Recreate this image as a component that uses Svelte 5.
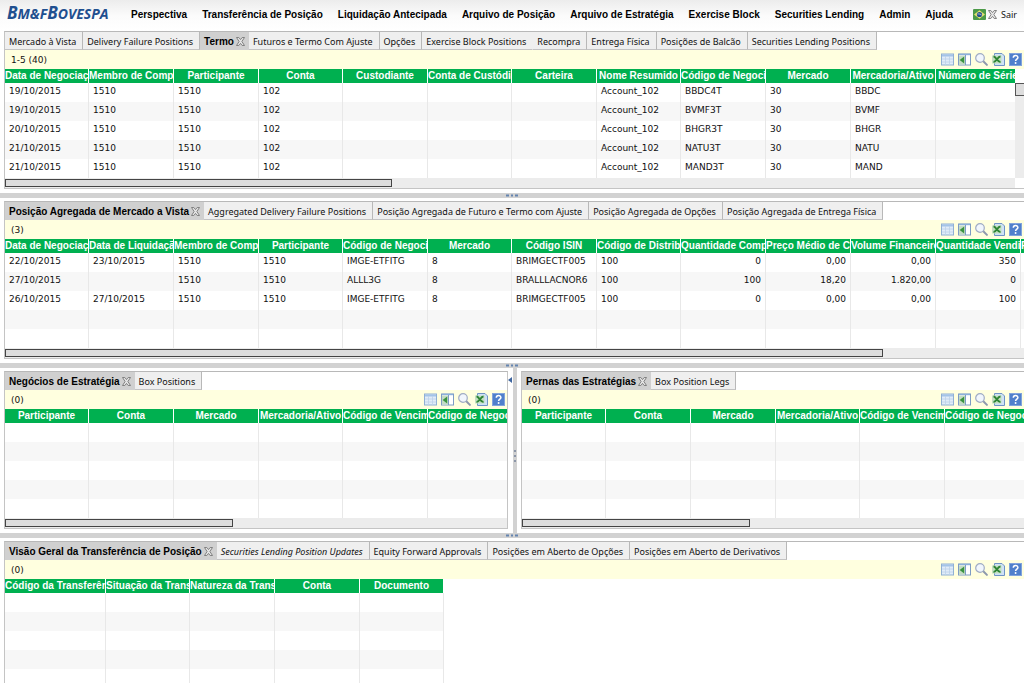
<script>
  const menu = [
    'Perspectiva', 'Transferência de Posição', 'Liquidação Antecipada', 'Arquivo de Posição',
    'Arquivo de Estratégia', 'Exercise Block', 'Securities Lending', 'Admin', 'Ajuda'
  ];

  const colWidths = [84, 85, 85, 84, 85, 84, 85, 84, 85, 85, 85, 85];
  const tools = ['Grid', 'Columns', 'Search', 'Excel', 'Help'];

  function emptyRows(count, cols) {
    return Array.from({ length: count }, () => Array(cols).fill(''));
  }

  const termo = {
    tabs: ['Mercado à Vista', 'Delivery Failure Positions', 'Termo', 'Futuros e Termo Com Ajuste', 'Opções', 'Exercise Block Positions', 'Recompra', 'Entrega Física', 'Posições de Balcão', 'Securities Lending Positions'],
    active: 2,
    merged: 5,
    count: '1-5 (40)',
    widths: colWidths,
    headers: ['Data de Negociação', 'Membro de Compensação', 'Participante', 'Conta', 'Custodiante', 'Conta de Custódia', 'Carteira', 'Nome Resumido', 'Código de Negociação', 'Mercado', 'Mercadoria/Ativo', 'Número de Série'],
    rows: [
      ['19/10/2015', '1510', '1510', '102', '', '', '', 'Account_102', 'BBDC4T', '30', 'BBDC', ''],
      ['19/10/2015', '1510', '1510', '102', '', '', '', 'Account_102', 'BVMF3T', '30', 'BVMF', ''],
      ['20/10/2015', '1510', '1510', '102', '', '', '', 'Account_102', 'BHGR3T', '30', 'BHGR', ''],
      ['21/10/2015', '1510', '1510', '102', '', '', '', 'Account_102', 'NATU3T', '30', 'NATU', ''],
      ['21/10/2015', '1510', '1510', '102', '', '', '', 'Account_102', 'MAND3T', '30', 'MAND', '']
    ],
    thumb: 38,
    vertical: true
  };

  const vista = {
    tabs: ['Posição Agregada de Mercado a Vista', 'Aggregated Delivery Failure Positions', 'Posição Agregada de Futuro e Termo com Ajuste', 'Posição Agregada de Opções', 'Posição Agregada de Entrega Física'],
    active: 0,
    count: '(3)',
    widths: [...colWidths, 84],
    numeric: 8,
    headers: ['Data de Negociação', 'Data de Liquidação', 'Membro de Compensação', 'Participante', 'Código de Negociação', 'Mercado', 'Código ISIN', 'Código de Distribuição', 'Quantidade Comprada', 'Preço Médio de Compra', 'Volume Financeiro', 'Quantidade Vendida', 'Preço Médio de Venda'],
    rows: [
      ['22/10/2015', '23/10/2015', '1510', '1510', 'IMGE-ETFITG', '8', 'BRIMGECTF005', '100', '0', '0,00', '0,00', '350', ''],
      ['27/10/2015', '', '1510', '1510', 'ALLL3G', '8', 'BRALLLACNOR6', '100', '100', '18,20', '1.820,00', '0', ''],
      ['26/10/2015', '27/10/2015', '1510', '1510', 'IMGE-ETFITG', '8', 'BRIMGECTF005', '100', '0', '0,00', '0,00', '100', ''],
      ...emptyRows(2, 13)
    ],
    thumb: 86.2
  };

  const legHeaders = ['Participante', 'Conta', 'Mercado', 'Mercadoria/Ativo', 'Código de Vencimento', 'Código de Negociação'];

  const negocios = {
    tabs: ['Negócios de Estratégia', 'Box Positions'],
    active: 0,
    count: '(0)',
    widths: colWidths.slice(0, 6),
    headers: legHeaders,
    rows: emptyRows(5, 6),
    thumb: 45.5
  };

  const pernas = { ...negocios, tabs: ['Pernas das Estratégias', 'Box Position Legs'] };

  const geral = {
    tabs: ['Visão Geral da Transferência de Posição', 'Securities Lending Position Updates', 'Equity Forward Approvals', 'Posições em Aberto de Opções', 'Posições em Aberto de Derivativos'],
    active: 0,
    italic: 1,
    count: '(0)',
    widths: [101, 84, 85, 85, 84],
    headers: ['Código da Transferência', 'Situação da Transferência', 'Natureza da Transferência', 'Conta', 'Documento'],
    rows: emptyRows(6, 5)
  };
</script>

{#snippet closeIcon()}
  <svg class="close-icon" viewBox="0 0 9 9" aria-hidden="true">
    <path d="M.5 .5h2.3L4.5 2.6 6.2 .5h2.3L5.9 4.5 8.5 8.5H6.2L4.5 6.4 2.8 8.5H.5L3.1 4.5z" fill="#e4e4e4" stroke="#777" stroke-width=".9" />
  </svg>
{/snippet}

{#snippet toolIcon(name)}
  <svg viewBox="0 0 13 13" aria-hidden="true">
    {#if name === 'Grid'}
      <rect x=".5" y="1" width="12" height="11" fill="#e0ecf8" stroke="#8fb0d4" />
      <path d="M1 2.5h11" stroke="#a4c4e8" stroke-width="2" />
      <path d="M4.5 3v9M8.5 3v9M1 6h11M1 9h11" stroke="#bcd2ea" stroke-width=".8" />
    {:else if name === 'Columns'}
      <rect x=".5" y="1" width="12" height="11" fill="#fff" stroke="#7d9cc4" />
      <path d="M1 1.5h11" stroke="#8cb0dc" stroke-width="1.4" />
      <rect x="1" y="2.5" width="6" height="9" fill="#c4dcc4" />
      <path d="M6.2 3.4v7L1.6 6.9z" fill="#3a9440" />
      <path d="M7.5 2v10" stroke="#7d9cc4" />
    {:else if name === 'Search'}
      <path d="M8.3 8.3l3.6 3.6" stroke="#8d98ac" stroke-width="2" stroke-linecap="round" />
      <circle cx="5" cy="5" r="4.3" fill="#f1f6fd" stroke="#a0acc4" stroke-width="1.2" />
    {:else if name === 'Excel'}
      <path d="M2.5 .5h7.500l2.500 2.500v9.500h-10z" fill="#cfe2f6" stroke="#6f94c6" />
      <rect x="0" y="2.500" width="9.500" height="8" fill="#c4dfc0" />
      <path d="M1.500 3.500c2.500 0 4 5.500 7 5.500M8.500 3.500c-3 0-4 5.500-7 5.500" fill="none" stroke="#2d8434" stroke-width="2" />
    {:else}
      <rect x=".5" y=".5" width="12" height="12" fill="#5080cc" stroke="#82a4dc" />
      <path d="M4.300 4.800c0-3 4.600-2.900 4.600-.3 0 1.700-2.300 1.700-2.300 3.500" fill="none" stroke="#fff" stroke-width="1.500" />
      <circle cx="6.600" cy="10" r=".95" fill="#fff" />
    {/if}
  </svg>
{/snippet}

{#snippet dots()}
  <svg class="dots" viewBox="0 0 14 5" aria-hidden="true">
    <path d="M1 1.500h3v2H1zM6 1.500h2v2H6zM10 1.500h3v2h-3z" fill="#6484b0" />
  </svg>
{/snippet}

{#snippet panel(p)}
  <section class="panel">
    <div class="tabs">
      {#each p.tabs as tab, i}
        <div class="tab" class:active={i === p.active} class:italic={i === p.italic} class:merged={i === p.merged}>
          <button>{tab}</button>
          {#if i === p.active}
            <button aria-label="Fechar">{@render closeIcon()}</button>
          {/if}
        </div>
      {/each}
    </div>
    <div class="toolbar">
      <span>{p.count}</span>
      <div class="tools">
        {#each tools as tool}
          <button aria-label={tool}>{@render toolIcon(tool)}</button>
        {/each}
      </div>
    </div>
    <div class="content">
      <div class="grid">
        <table>
          <colgroup>
            {#each p.widths as width}
              <col style="width: {width}px" />
            {/each}
          </colgroup>
          <thead>
            <tr>
              {#each p.headers as header}
                <th>{header}</th>
              {/each}
            </tr>
          </thead>
          <tbody>
            {#each p.rows as row}
              <tr>
                {#each row as cell, i}
                  <td class:number={p.numeric && i >= p.numeric}>{cell}</td>
                {/each}
              </tr>
            {/each}
          </tbody>
        </table>
      </div>
      {#if p.vertical}
        <div class="vscroll"><div class="vthumb"></div></div>
      {/if}
    </div>
    {#if p.thumb}
      <div class="hscroll" class:short={p.vertical}>
        <div class="hthumb" style="width: {p.thumb}%"></div>
      </div>
    {/if}
  </section>
{/snippet}

<div class="app">
  <header>
    <div class="logo">B<small>M&amp;F</small>B<small>OVESPA</small></div>
    <nav>
      {#each menu as item}
        <button>{item}</button>
      {/each}
    </nav>
    <div class="session">
      <svg class="flag" viewBox="0 0 13 11" aria-hidden="true">
        <rect width="13" height="11" rx="1" fill="#4c9a48" />
        <path d="M6.500 1.200L12 5.500 6.500 9.800 1 5.500z" fill="#e4e070" />
        <circle cx="6.500" cy="5.500" r="2.600" fill="#24508c" />
        <path d="M4.500 5c1.500-.3 3 .1 4 1" stroke="#fff" stroke-width=".6" fill="none" />
      </svg>
      <button class="exit">{@render closeIcon()} Sair</button>
    </div>
  </header>

  {@render panel(termo)}
  <div class="splitter">{@render dots()}</div>
  {@render panel(vista)}
  <div class="splitter">{@render dots()}</div>
  <div class="split">
    {@render panel(negocios)}
    <div class="vsplitter">
      <svg class="collapse" viewBox="0 0 4 6" aria-hidden="true"><path d="M4 0v6L0 3z" fill="#3f66a0" /></svg>
      <svg class="grip" viewBox="0 0 2 12" aria-hidden="true"><path d="M0 0h2v2H0zM0 5h2v2H0zM0 10h2v2H0z" fill="#8c96a8" /></svg>
    </div>
    {@render panel(pernas)}
  </div>
  <div class="splitter">{@render dots()}</div>
  {@render panel(geral)}
</div>

<style>
  :global(body) {
    margin: 0;
    background: #fff;
  }

  .app {
    height: 100vh;
    overflow: hidden;
    font-family: "DejaVu Sans", sans-serif;
    font-size: 9px;
    color: #111;
  }

  button {
    border: 0;
    padding: 0;
    background: none;
    font: inherit;
    color: inherit;
    white-space: nowrap;
  }

  svg {
    display: block;
  }

  header {
    display: flex;
    align-items: center;
    height: 27px;
    padding: 0 7px 4px;
    background: linear-gradient(#ececec, #fbfbfb 50%, #fff);
  }

  .logo {
    width: 124px;
    flex: none;
    font: italic 700 17px "Open Sans", sans-serif;
    line-height: 24px;
    color: #1f4f8f;
  }

  .logo small {
    font-size: 14px;
  }

  nav {
    display: flex;
    gap: 15px;
    padding-top: 1px;
    font: 700 10px "Liberation Sans", Arial, sans-serif;
    color: #000;
  }

  .session {
    display: flex;
    align-items: center;
    gap: 2px;
    margin-left: auto;
    padding-top: 1px;
  }

  .flag {
    width: 13px;
    height: 11px;
  }

  .exit {
    display: flex;
    align-items: center;
    gap: 4px;
    font-family: "Noto Sans", sans-serif;
  }

  .close-icon {
    width: 9px;
    height: 9px;
  }

  .panel {
    min-width: 0;
    margin-left: 4px;
    border-left: 1px solid #c4c4c4;
    border-top: 1px solid #b8b8b8;
  }

  .tabs {
    display: flex;
    height: 18px;
  }

  .tab {
    display: flex;
    align-items: center;
    padding: 2px 6px 0 4px;
    border-right: 1px solid #b8b8b8;
    border-bottom: 1px solid #c4c4c4;
    background: #efefef;
    font-family: "Noto Sans", sans-serif;
  }

  .tab.active {
    gap: 2px;
    padding: 2px 3px 0 4px;
    background: #d0d0d0;
    border-color: #d0d0d0;
    font: 700 10px "Liberation Sans", Arial, sans-serif;
    color: #000;
  }

  .tab.italic {
    font-style: italic;
  }

  .tab.merged {
    border-right-color: #efefef;
  }

  .toolbar {
    display: flex;
    align-items: center;
    justify-content: space-between;
    height: 19px;
    padding: 0 2px 0 6px;
    background: #ffffdf;
  }

  .tools {
    display: flex;
    gap: 4px;
  }

  .tools svg {
    width: 13px;
    height: 13px;
  }

  .content {
    display: flex;
  }

  .grid {
    flex: 1;
    min-width: 0;
    overflow: hidden;
  }

  table {
    table-layout: fixed;
    width: 1px;
    border-spacing: 0;
  }

  th,
  td {
    box-sizing: border-box;
    overflow: hidden;
    white-space: nowrap;
  }

  th {
    height: 14px;
    padding: 0;
    border-right: 1px solid #fff;
    background: #00b050;
    color: #fff;
    font: 700 10px "Liberation Sans", Arial, sans-serif;
    line-height: 14px;
  }

  td {
    height: 19px;
    padding: 0 4px 2px;
    border-right: 1px solid #e8e8e8;
    line-height: 17px;
  }

  td.number {
    text-align: right;
  }

  tbody tr:nth-child(even) {
    background: #f7f7f7;
  }

  .vscroll {
    width: 9px;
    margin-top: 14px;
    background: #ececec;
  }

  .vthumb {
    height: 11px;
    border: 1px solid #555;
    border-right: 0;
    background: #ddd;
  }

  .hscroll {
    padding-top: 1px;
    height: 9px;
    border-bottom: 1px solid #c4c4c4;
    background: #ececec;
  }

  .hscroll.short {
    box-shadow: inset -9px 0 #fff;
  }

  .hthumb {
    box-sizing: border-box;
    height: 8px;
    border: 1px solid #444;
    background: #ddd;
  }

  .splitter {
    display: flex;
    justify-content: center;
    height: 5px;
    margin: 4px 0 3px;
    background: #d2d2d2;
  }

  .dots {
    width: 14px;
    height: 5px;
  }

  .split {
    display: flex;
  }

  .split .panel {
    flex: 1;
    border-right: 1px solid #c4c4c4;
  }

  .split .vsplitter + .panel {
    border-right: 0;
  }

  .vsplitter {
    position: relative;
    width: 4px;
    margin: -4px 0 -4px 5px;
    background: #d2d2d2;
  }

  .collapse {
    position: absolute;
    top: 10px;
    right: 5px;
    width: 4px;
    height: 6px;
  }

  .grip {
    position: absolute;
    top: 50%;
    left: 1px;
    width: 2px;
    height: 12px;
  }
</style>
